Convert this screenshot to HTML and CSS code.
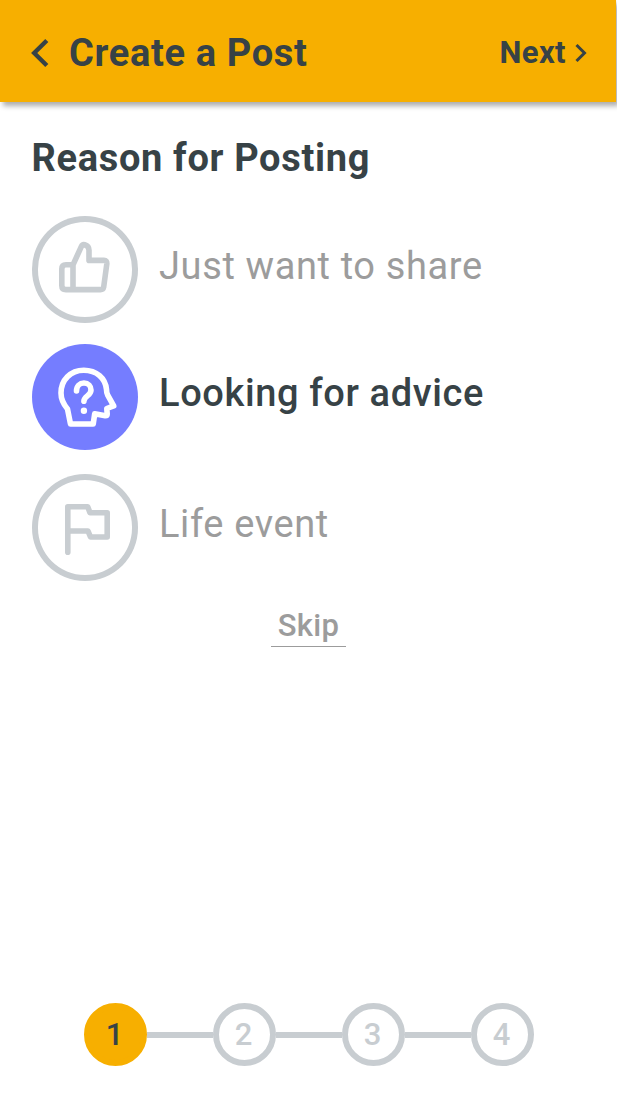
FILE: index.html
```html
<!DOCTYPE html>
<html lang="en">
<head>
<meta charset="utf-8">
<title>Create a Post</title>
<link rel="stylesheet" href="styles.css">
</head>
<body>
<div class="screen">
  <header class="topbar">
    <div class="back">
      <svg class="back-icon" viewBox="0 0 18 30" fill="none"><path d="M15.8 2.5 L3.2 15 L15.8 27.5"/></svg>
      <h1 class="title">Create a Post</h1>
    </div>
    <div class="next">
      <span class="next-label">Next</span>
      <svg class="next-icon" viewBox="0 0 12 20" fill="none"><path d="M1.5 2 L9.5 10 L1.5 18"/></svg>
    </div>
  </header>
  <main class="content">
    <h2 class="heading">Reason for Posting</h2>
    <ul class="reasons">
      <li class="reason">
        <span class="badge"><svg class="icon" viewBox="31.5 216 106.5 106.5"><path d="M72.5 289.6H65.5Q61.3 289.6 61.3 285.4V269Q61.3 264.8 65.5 264.8H72.5V289.6H100Q102.7 289.6 103.2 287L106.3 264Q106.6 260.4 103.5 260.4H88.5V250.3Q88.5 246 84.2 244.7Q82 244 80.8 246.6L72.5 264.8"/></svg></span>
        <span class="label">Just want to share</span>
      </li>
      <li class="reason selected">
        <span class="badge"><svg class="icon" viewBox="31.5 343.5 106.5 106.5"><path d="M70 423.5H92.7L94.2 413.3L104.8 415.3Q106.7 415.3 106.7 413.5L106.3 408L113.2 405.4L107.2 394.7Q106 392.5 106 389C105 377.5 96 369.7 83.3 369.7C70 369.7 60.5 379.5 60.5 392.5C60.5 399 62.8 403.5 67 408.5Z"/><path d="M76 390.5C76 385.5 79.3 382.5 83.5 382.5C87.8 382.5 90.5 385.7 90.5 389.5C90.5 395.5 83.4 395.2 83.4 400.8"/><circle class="dot" cx="83.4" cy="410.3" r="3.2"/></svg></span>
        <span class="label">Looking for advice</span>
      </li>
      <li class="reason">
        <span class="badge"><svg class="icon" viewBox="31.5 474 106.5 106.5"><path d="M67.3 552.3V506.7H87.2L89.5 512.7H106.7V537H90L87.5 531H67.3"/></svg></span>
        <span class="label">Life event</span>
      </li>
    </ul>
    <a class="skip">Skip</a>
  </main>
  <footer class="steps">
    <span class="step current">1</span>
    <span class="line"></span>
    <span class="step">2</span>
    <span class="line"></span>
    <span class="step">3</span>
    <span class="line"></span>
    <span class="step">4</span>
  </footer>
</div>
</body>
</html>
```
FILE: styles.css
```css
* { box-sizing: border-box; }
body {
  margin: 0;
  background: #fff;
  color: #374246;
  font-family: Roboto, sans-serif;
}
.screen {
  display: flex;
  flex-direction: column;
  width: 617px;
  height: 1097px;
  overflow: hidden;
}
.topbar {
  display: flex;
  flex: none;
  justify-content: space-between;
  align-items: center;
  width: 616px;
  height: 102px;
  padding: 3px 29px 0 31px;
  background: #f7af00;
  box-shadow: 3px 4px 5px rgba(0, 0, 0, 0.32);
}
.back, .next { display: flex; align-items: center; }
.back { gap: 20px; }
.next { gap: 9px; }
.back-icon { width: 18px; height: 30px; stroke: #374246; stroke-width: 4.4; }
.next-icon { width: 12px; height: 20px; stroke: #374246; stroke-width: 3; }
.title { margin: 0; font-size: 38px; line-height: 46px; font-weight: 700; letter-spacing: 0.65px; }
.next-label { font-size: 31px; line-height: 36px; font-weight: 700; letter-spacing: 0.4px; }
.content {
  display: flex;
  flex: 1;
  flex-direction: column;
  padding: 32px 31.5px 0;
}
.heading { margin: 0; font-size: 38px; line-height: 48px; font-weight: 700; letter-spacing: 0.67px; }
.reasons {
  display: flex;
  flex-direction: column;
  gap: 21px;
  margin: 34px 0 0;
  padding: 0;
  list-style: none;
}
.reason {
  display: flex;
  align-items: center;
  gap: 21px;
  color: #9c9c9c;
  font-size: 38px;
  letter-spacing: 0.62px;
}
.badge {
  display: flex;
  width: 106.5px;
  height: 106.5px;
  border-radius: 50%;
  box-shadow: inset 0 0 0 6px #c8cdd1;
}
.icon {
  width: 106.5px;
  height: 106.5px;
  fill: none;
  stroke: #c8cdd1;
  stroke-width: 5.6;
  stroke-linecap: round;
  stroke-linejoin: round;
}
.label { padding-bottom: 7px; line-height: 46px; }
.selected { margin-bottom: 3px; color: #374246; font-weight: 500; }
.selected .badge { background: #757dff; box-shadow: none; }
.selected .icon { stroke: #fff; }
.dot { fill: #fff; stroke: none; }
.skip {
  align-self: center;
  width: 75px;
  margin-top: 25px;
  border-bottom: 1.5px solid #9c9c9c;
  color: #9c9c9c;
  font-size: 31px;
  font-weight: 500;
  letter-spacing: 0.3px;
  line-height: 40px;
  text-align: center;
}
.steps {
  display: flex;
  align-items: center;
  padding: 0 83px 31px 84px;
}
.step {
  display: flex;
  justify-content: center;
  align-items: center;
  width: 63px;
  height: 63px;
  padding-right: 2px;
  border: 6px solid #c8cdd1;
  border-radius: 50%;
  color: #c8cdd1;
  font-size: 31px;
  font-weight: 500;
}
.current { border-color: #f7af00; background: #f7af00; color: #374246; }
.line { flex: 1; height: 6px; background: #c8cdd1; }
```
